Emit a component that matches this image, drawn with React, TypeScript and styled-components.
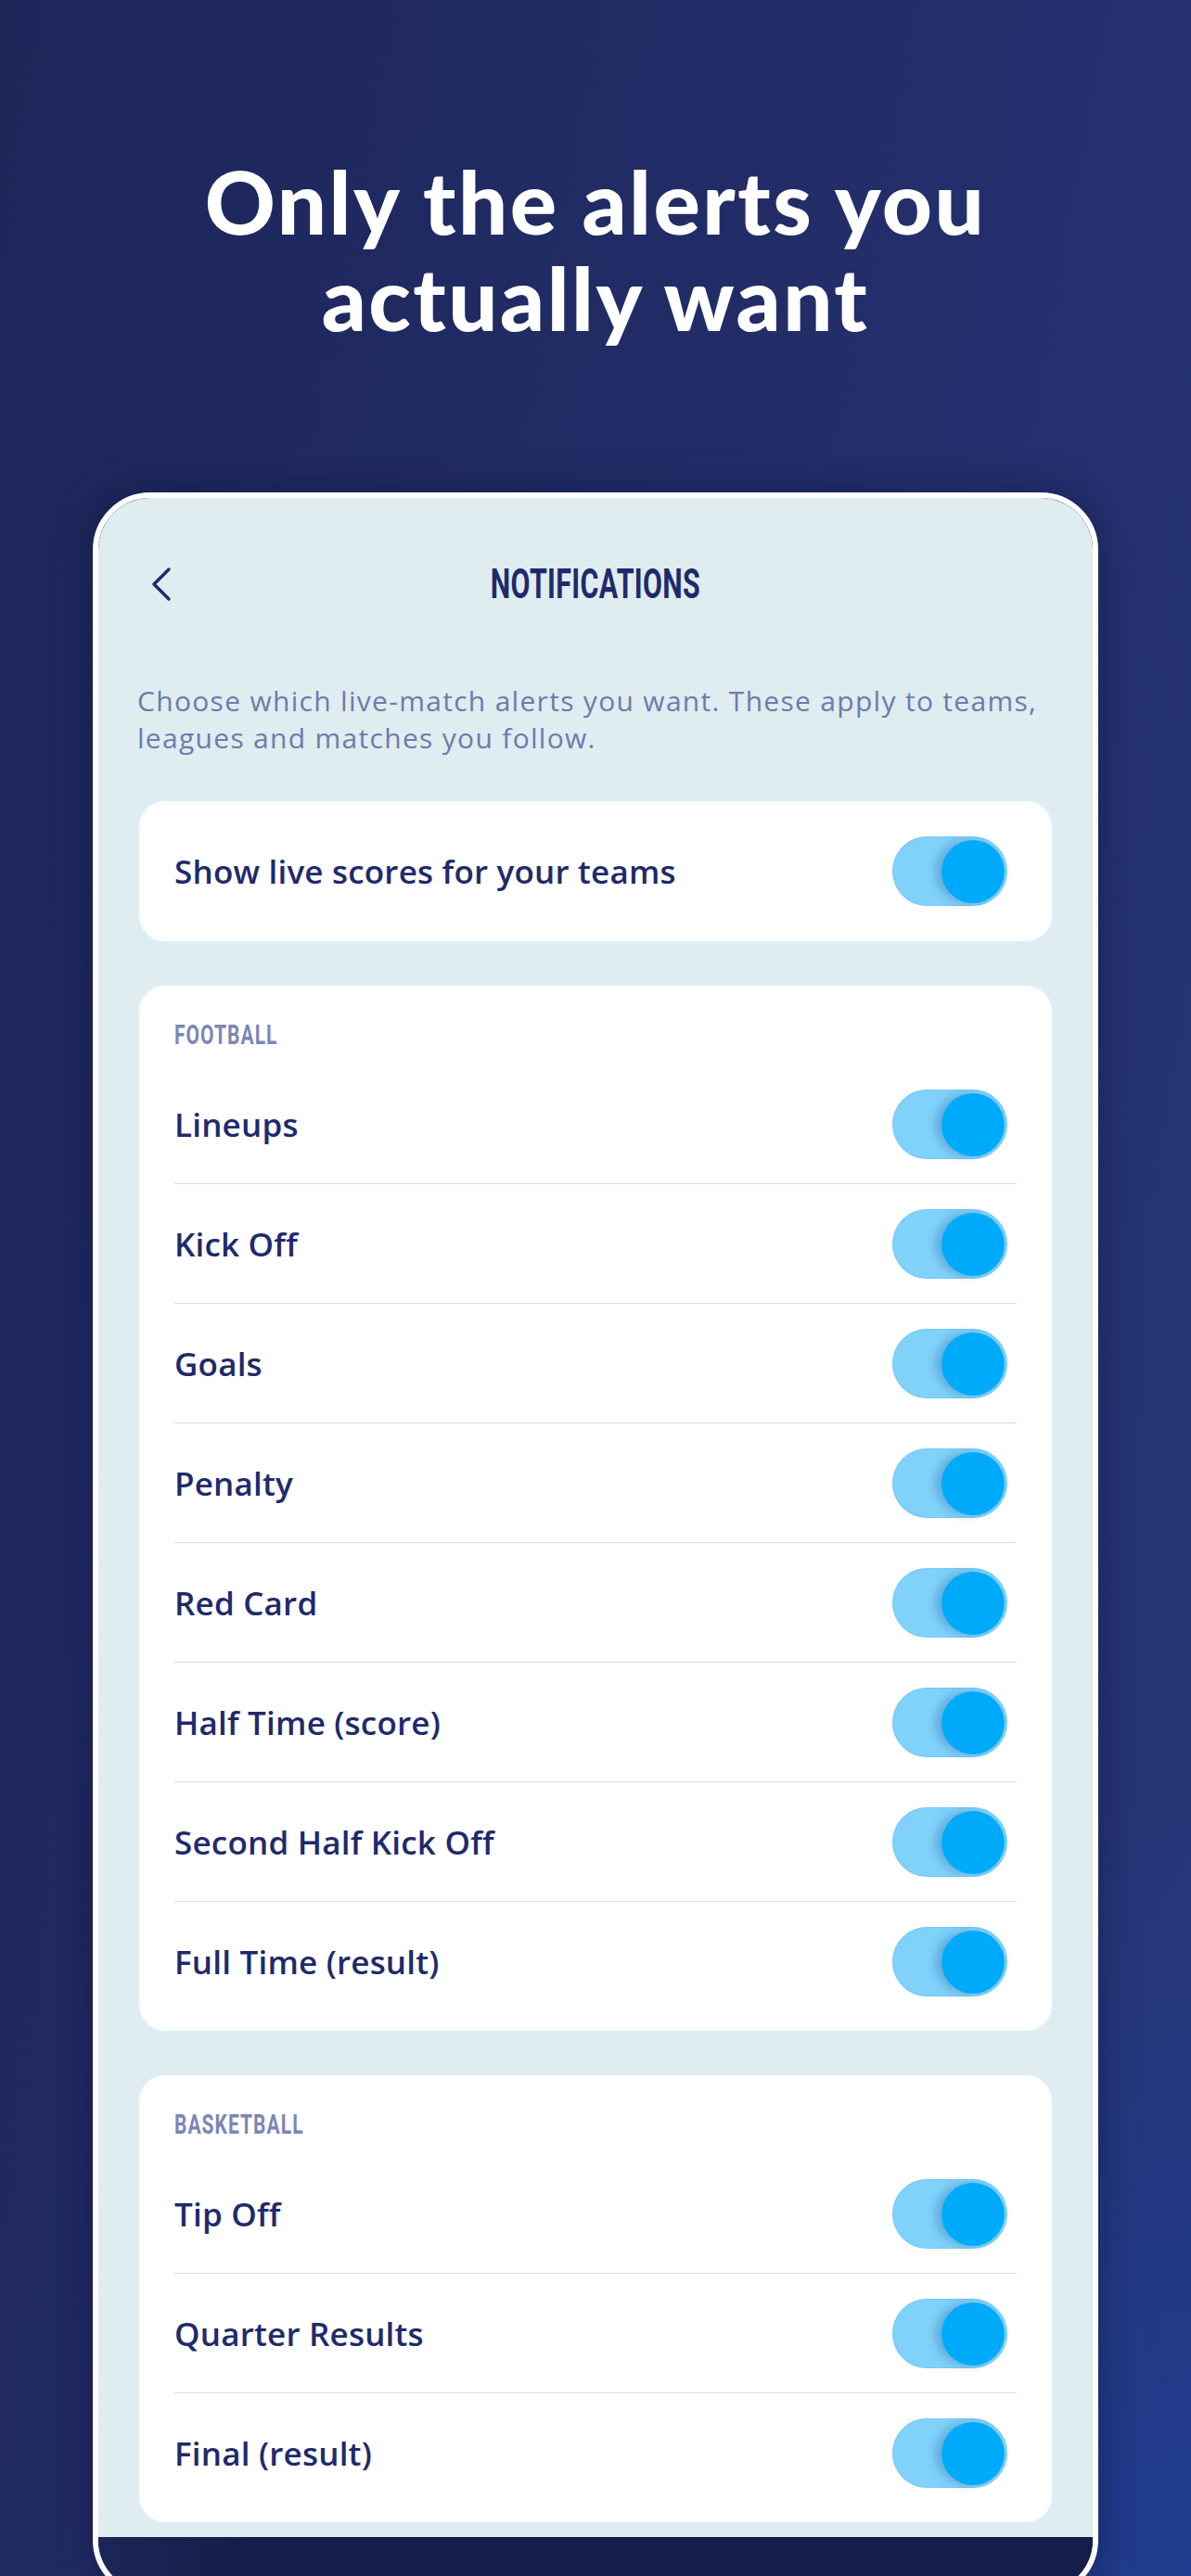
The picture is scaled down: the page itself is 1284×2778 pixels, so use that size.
import React from 'react';
import styled, { createGlobalStyle } from 'styled-components';

const GlobalStyle = createGlobalStyle`
  html, body {
    margin: 0;
    padding: 0;
  }
  body {
    height: 2778px;
    overflow: hidden;
    font-family: 'Open Sans', Lato, sans-serif;
    background:
      radial-gradient(ellipse 900px 1200px at 100% 100%, rgba(24, 66, 160, 0.55), rgba(24, 66, 160, 0) 70%),
      linear-gradient(100deg, #1d2659 0%, #222d68 50%, #283679 100%);
  }
`;

const Page = styled.div`
  display: flex;
  flex-direction: column;
  align-items: center;
  padding-top: 165px;
`;

const Headline = styled.h1`
  margin: 0;
  color: #ffffff;
  font-family: Lato, sans-serif;
  font-weight: 900;
  font-size: 94px;
  line-height: 104px;
  letter-spacing: 2.5px;
  text-align: center;
`;

const Phone = styled.div`
  margin-top: 158px;
  width: 1084px;
  box-sizing: border-box;
  border: 6px solid #ffffff;
  border-radius: 62px;
  overflow: hidden;
  background: #141e48;
  box-shadow: 0 0 40px rgba(12, 16, 48, 0.45);
`;

const Screen = styled.div`
  background: #dfecf0;
  padding: 70px 42px 14px;
`;

const Header = styled.div`
  display: grid;
  grid-template-columns: 1fr auto 1fr;
  align-items: center;
  height: 46px;
`;

const Back = styled.button`
  justify-self: start;
  border: none;
  background: none;
  padding: 0;
  margin-left: 14px;
  display: flex;
  cursor: pointer;
`;

const Title = styled.h2`
  margin: 0;
  color: #1f2a6c;
  font-family: Roboto, sans-serif;
  font-weight: 700;
  font-size: 44px;
  line-height: 46px;
  transform: scaleX(0.69);
  letter-spacing: 0.5px;
`;

const Intro = styled.p`
  margin: 83px 0 0;
  color: #6b7bad;
  font-size: 30px;
  line-height: 40px;
  letter-spacing: 1.3px;
`;

const Card = styled.section<{ $top: number; $bottom: number }>`
  margin-top: ${(p) => p.$top}px;
  background: #ffffff;
  border: 2px solid #d9f0fb;
  border-radius: 30px;
  padding: 0 38px ${(p) => p.$bottom}px;
`;

const SingleRow = styled.div`
  display: flex;
  align-items: center;
  justify-content: space-between;
  height: 151px;
`;

const SectionLabel = styled.div`
  height: 85px;
  padding-top: 38px;
  box-sizing: border-box;
  color: #7c86b5;
  font-family: Roboto, sans-serif;
  font-weight: 700;
  font-size: 30px;
  line-height: 30px;
  letter-spacing: 1.5px;
  transform: scaleX(0.7);
  transform-origin: left center;
`;

const Row = styled.div`
  display: flex;
  align-items: center;
  justify-content: space-between;
  height: 128px;
  border-bottom: 1px solid #d8dbea;

  &:last-child {
    border-bottom: none;
  }
`;

const Label = styled.span`
  color: #1f2a6c;
  font-size: 35px;
  font-weight: 600;
  letter-spacing: 0.2px;
`;

const Track = styled.div`
  position: relative;
  width: 124px;
  height: 75px;
  margin-right: 10px;
  border-radius: 38px;
  background: #80d2fa;
  box-shadow: inset 0 0 0 1px rgba(110, 195, 245, 0.6);
  flex-shrink: 0;
`;

const Thumb = styled.div`
  position: absolute;
  top: 4px;
  right: 3px;
  width: 68px;
  height: 68px;
  border-radius: 50%;
  background: #00aafa;
  box-shadow: -7px 0 10px rgba(20, 80, 140, 0.28);
`;

const HomeBar = styled.div`
  height: 59px;
  background: linear-gradient(90deg, #1b2658 0%, #141e48 15%, #141e48 100%);
`;

function Toggle() {
  return (
    <Track>
      <Thumb />
    </Track>
  );
}

const football = [
  'Lineups',
  'Kick Off',
  'Goals',
  'Penalty',
  'Red Card',
  'Half Time (score)',
  'Second Half Kick Off',
  'Full Time (result)',
];

const basketball = ['Tip Off', 'Quarter Results', 'Final (result)'];

function Section({ title, items }: { title: string; items: string[] }) {
  return (
    <Card $top={44} $bottom={11}>
      <SectionLabel>{title}</SectionLabel>
      {items.map((item) => (
        <Row key={item}>
          <Label>{item}</Label>
          <Toggle />
        </Row>
      ))}
    </Card>
  );
}

export default function App() {
  return (
    <>
      <GlobalStyle />
      <Page>
        <Headline>
          Only the alerts you
          <br />
          actually want
        </Headline>
        <Phone>
          <Screen>
            <Header>
              <Back aria-label="Back">
                <svg width="24" height="40" viewBox="0 0 24 40" fill="none">
                  <path
                    d="M20 4 L4 20 L20 36"
                    stroke="#1f2a6c"
                    strokeWidth="3.5"
                    strokeLinecap="round"
                    strokeLinejoin="round"
                  />
                </svg>
              </Back>
              <Title>NOTIFICATIONS</Title>
              <span />
            </Header>
            <Intro>
              Choose which live-match alerts you want. These apply to teams,
              <br />
              leagues and matches you follow.
            </Intro>
            <Card $top={46} $bottom={0}>
              <SingleRow>
                <Label>Show live scores for your teams</Label>
                <Toggle />
              </SingleRow>
            </Card>
            <Section title="FOOTBALL" items={football} />
            <Section title="BASKETBALL" items={basketball} />
          </Screen>
          <HomeBar />
        </Phone>
      </Page>
    </>
  );
}
